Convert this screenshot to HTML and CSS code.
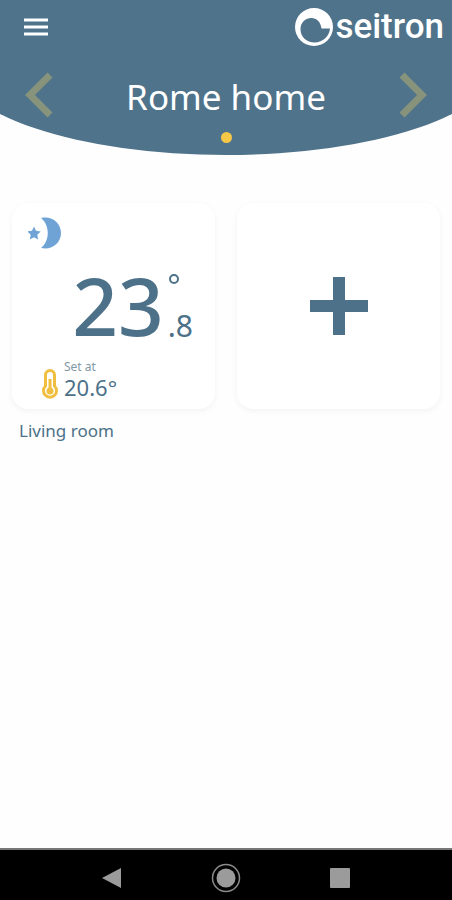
FILE: index.html
```html
<!DOCTYPE html>
<html lang="en">
<head>
<meta charset="utf-8">
<meta name="viewport" content="width=device-width, initial-scale=1">
<title>Seitron</title>
<link rel="stylesheet" href="styles.css">
</head>
<body>
<header class="header">
  <div class="topbar">
    <button class="icon-button" aria-label="Menu">
      <svg width="24" height="18" viewBox="0 0 24 18"><path d="M0 2h24M0 9h24M0 16h24" stroke="#fff" stroke-width="3"/></svg>
    </button>
    <a class="logo" href="#">
      <svg width="38" height="38" viewBox="0 0 38 38"><path fill="#fff" fill-rule="evenodd" d="M19 0a19 19 0 1 0 0 38 19 19 0 0 0 0-38zM16.500 10c5 0 9 3.500 10 10.500h8.500C34.500 28 28 34.500 19.500 34.500c-8 0-14-5.500-14-13.500 0-6.500 5-11 11-11z"/></svg>
      <span>seitron</span>
    </a>
  </div>
  <div class="switcher">
    <button class="icon-button" aria-label="Previous home">
      <svg width="28" height="46" viewBox="0 0 28 46"><path d="M25 3 5 23l20 20" fill="none" stroke="#87937b" stroke-width="7"/></svg>
    </button>
    <h1 class="title">Rome home</h1>
    <button class="icon-button" aria-label="Next home">
      <svg width="28" height="46" viewBox="0 0 28 46"><path d="m3 3 20 20L3 43" fill="none" stroke="#87937b" stroke-width="7"/></svg>
    </button>
  </div>
  <div class="page-dot"></div>
</header>
<main class="rooms">
  <section class="room">
    <a class="card" href="#">
      <svg class="mode" width="34" height="32" viewBox="0 0 34 32" fill="#6fa3d6"><path d="M13 1c11-2.500 20 5 20 15s-9 17.500-20 15c9-7 9-23 0-30z"/><path d="m6 9.500 2 4.300 4.700.6-3.400 3.300.8 4.800L6 20.200l-4.200 2.300.9-4.800L-.7 14.400l4.700-.6z"/></svg>
      <span class="reading">
        <span class="whole">23</span>
        <span class="fraction">
          <svg width="12" height="12" viewBox="0 0 12 12"><circle cx="6" cy="6" r="4" fill="none" stroke="#4c7188" stroke-width="2"/></svg>
          <span>.8</span>
        </span>
      </span>
      <span class="setpoint">
        <svg width="16" height="30" viewBox="0 0 16 30" fill="none" stroke="#f0bf40"><path d="M3.500 17V6a4.500 4.500 0 0 1 9 0v11a6.500 6.500 0 1 1-9 0z" stroke-width="3"/><path d="M8 10v12" stroke-width="3"/><circle cx="8" cy="22" r="3.500" fill="#f0bf40" stroke="none"/></svg>
        <span class="target"><span class="caption">Set at</span><span class="value">20.6°</span></span>
      </span>
    </a>
    <h2 class="room-name">Living room</h2>
  </section>
  <button class="card add" aria-label="Add room">
    <svg width="58" height="58" viewBox="0 0 58 58"><path d="M29 0v58M0 29h58" stroke="#4c7188" stroke-width="12"/></svg>
  </button>
</main>
<nav class="system">
  <button class="icon-button" aria-label="Back"><svg width="30" height="30" viewBox="0 0 30 30"><path d="M5 15 24 5v20z" fill="#9b9b9b"/></svg></button>
  <button class="icon-button" aria-label="Home"><svg width="30" height="30" viewBox="0 0 30 30"><circle cx="15" cy="15" r="13.500" fill="none" stroke="#8b8b8b" stroke-width="1.500"/><circle cx="15" cy="15" r="9.500" fill="#9b9b9b"/></svg></button>
  <button class="icon-button" aria-label="Recent apps"><svg width="30" height="30" viewBox="0 0 30 30"><rect x="5" y="5" width="20" height="20" rx="1" fill="#9b9b9b"/></svg></button>
</nav>
</body>
</html>
```
FILE: styles.css
```css
* {
  box-sizing: border-box;
}

body {
  display: flex;
  flex-direction: column;
  min-height: 100vh;
  margin: 0;
  background: #fefefe;
  color: #4c7188;
  font-family: "Noto Sans", sans-serif;
}

svg {
  display: block;
}

button {
  padding: 0;
  border: 0;
  background: none;
  color: inherit;
  font: inherit;
}

a {
  color: inherit;
  text-decoration: none;
}

.header {
  position: relative;
  overflow: hidden;
  padding-bottom: 12px;
}

.header::before {
  content: "";
  position: absolute;
  z-index: -1;
  inset: 0 -10%;
  border-radius: 0 0 50% 50% / 0 0 92px 92px;
  background: #4f738b;
}

.topbar {
  display: flex;
  align-items: center;
  justify-content: space-between;
  height: 54px;
  padding: 0 8px 0 24px;
}

.logo {
  display: flex;
  align-items: center;
  gap: 2px;
  color: #fff;
  font: 500 35px/40px Roboto, sans-serif;
}

.switcher {
  display: flex;
  align-items: center;
  justify-content: space-between;
  height: 78px;
  padding: 4px 25px 0;
}

.title {
  margin: 0;
  padding-top: 4px;
  color: #fff;
  font-size: 35px;
  font-weight: 400;
  line-height: 48px;
}

.page-dot {
  width: 11px;
  height: 11px;
  margin: 0 auto;
  border-radius: 50%;
  background: #f7c748;
}

.rooms {
  display: grid;
  flex: 1;
  grid-template-columns: 1fr 1fr;
  align-items: start;
  gap: 22px;
  padding: 48px 12px 0;
}

.card {
  display: flex;
  flex-direction: column;
  width: 100%;
  min-height: 206px;
  padding: 14px 16px 10px;
  border-radius: 16px;
  background: #fff;
  box-shadow: 0 2px 6px rgb(0 0 0 / 5%);
}

.add {
  align-items: center;
  justify-content: center;
  padding-top: 10px;
}

.reading {
  display: flex;
  align-items: flex-end;
  justify-content: flex-end;
  gap: 4px;
  margin-top: 20px;
  padding-right: 6px;
}

.whole {
  font-size: 80px;
  font-weight: 500;
  line-height: 72px;
}

.fraction {
  display: flex;
  flex-direction: column;
  justify-content: space-between;
  height: 68px;
  font-size: 30px;
  line-height: 30px;
}

.setpoint {
  display: flex;
  align-items: flex-end;
  gap: 6px;
  margin-top: 18px;
  padding-left: 14px;
}

.target {
  display: flex;
  flex-direction: column;
}

.caption {
  color: #8298a6;
  font-size: 12px;
  line-height: 16px;
}

.value {
  font-size: 22px;
  line-height: 24px;
}

.room-name {
  margin: 10px 7px 0;
  font-size: 17px;
  font-weight: 400;
  line-height: 24px;
}

.system {
  display: flex;
  align-items: center;
  justify-content: center;
  gap: 84px;
  height: 52px;
  padding-top: 6px;
  border-top: 2px solid #777;
  background: #000;
}
```
